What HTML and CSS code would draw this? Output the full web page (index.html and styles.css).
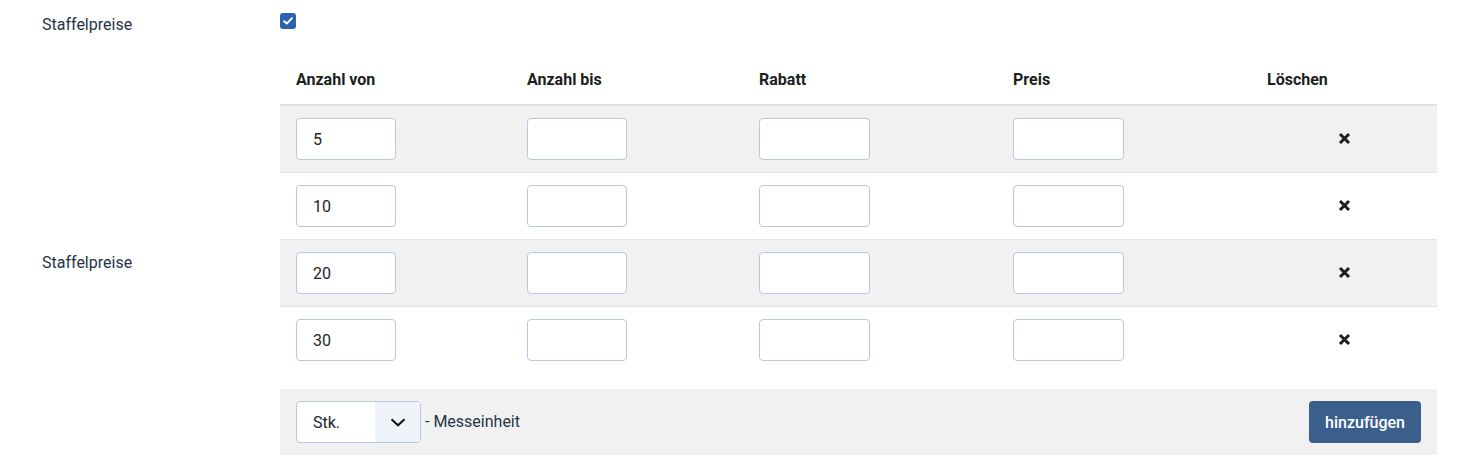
FILE: index.html
```html
<!DOCTYPE html>
<html lang="de">
<head>
    <meta charset="UTF-8">
    <meta name="viewport" content="width=device-width, initial-scale=1.0">
    <title>Staffelpreise</title>
    <link rel="stylesheet" href="styles.css">
</head>
<body>
    <div class="field field-top">
        <label class="field-label">Staffelpreise</label>
        <div class="field-control">
            <span class="check">
                <svg width="10" height="8" viewBox="0 0 10 8"><path d="M1.2 4.2 L3.8 6.6 L8.8 1.4" fill="none" stroke="#fff" stroke-width="2" stroke-linecap="round" stroke-linejoin="round"/></svg>
            </span>
        </div>
    </div>

    <div class="field field-tiers">
        <label class="field-label">Staffelpreise</label>
        <div class="field-control tiers">
            <table class="tier-table">
                <colgroup>
                    <col style="width: 231px">
                    <col style="width: 232px">
                    <col style="width: 254px">
                    <col style="width: 254px">
                    <col>
                </colgroup>
                <thead>
                    <tr>
                        <th>Anzahl von</th>
                        <th>Anzahl bis</th>
                        <th>Rabatt</th>
                        <th>Preis</th>
                        <th>Löschen</th>
                    </tr>
                </thead>
                <tbody id="tierRows"></tbody>
            </table>

            <div class="tier-footer">
                <div class="unit">
                    <div class="select-wrap">
                        <select class="unit-select">
                            <option>Stk.</option>
                        </select>
                        <span class="select-arrow">
                            <svg width="16" height="9" viewBox="0 0 16 9"><path d="M1.5 1.3 L8 7.3 L14.5 1.3" fill="none" stroke="#111" stroke-width="2"/></svg>
                        </span>
                    </div>
                    <span class="unit-text">- Messeinheit</span>
                </div>
                <button class="btn-add">hinzufügen</button>
            </div>
        </div>
    </div>

    <script>
        const tiers = ['5', '10', '20', '30'];
        const rows = document.getElementById('tierRows');

        function renderRows() {
            rows.innerHTML = '';
            tiers.forEach((from, i) => {
                const tr = document.createElement('tr');
                tr.innerHTML =
                    '<td><input class="tier-input" type="text" value="' + from + '"></td>' +
                    '<td><input class="tier-input" type="text"></td>' +
                    '<td><input class="tier-input" type="text"></td>' +
                    '<td><input class="tier-input" type="text"></td>' +
                    '<td class="del"><svg width="13" height="13" viewBox="0 0 13 13"><path d="M2 2 L11 11 M11 2 L2 11" stroke="#1b1e21" stroke-width="3"/></svg></td>';
                rows.appendChild(tr);
            });
        }

        renderRows();
    </script>
</body>
</html>
```

FILE: styles.css
```css
body {
    margin: 0;
    font-family: 'Roboto', 'Liberation Sans', sans-serif;
    font-size: 16px;
    line-height: 24px;
    color: #212529;
    background-color: #fff;
}

.field {
    display: flex;
    margin-right: 44px;
}

.field-label {
    width: 280px;
    flex-shrink: 0;
    box-sizing: border-box;
    padding-left: 42px;
    color: #253447;
}

.field-control {
    flex: 1;
}

.field-top {
    height: 58px;
    box-sizing: border-box;
    padding-top: 13px;
    align-items: flex-start;
}

.check {
    display: flex;
    align-items: center;
    justify-content: center;
    width: 16px;
    height: 16px;
    border-radius: 3px;
    background-color: #2b63ae;
}

.field-tiers {
    align-items: center;
}

.tiers {
    padding-bottom: 13px;
}

.tier-table {
    width: 100%;
    border-collapse: collapse;
    table-layout: fixed;
}

.tier-table th {
    text-align: left;
    font-weight: 700;
    padding: 10px 16px 12px;
    border-bottom: 2px solid #dee2e6;
    color: #1b1e21;
}

.tier-table td {
    padding: 12px 16px;
    border-bottom: 1px solid #dee2e6;
    vertical-align: middle;
}

.tier-table tbody tr:last-child td {
    border-bottom-color: transparent;
}

.tier-table tbody tr:nth-child(odd) {
    background-color: #f1f1f1;
}

.tier-input {
    display: block;
    width: 50%;
    height: 42px;
    box-sizing: border-box;
    padding: 8px 16px;
    border: 1px solid #b9c8e0;
    border-radius: 4px;
    background-color: #fff;
    font-family: inherit;
    font-size: 16px;
    color: #212529;
}

.del {
    text-align: center;
}

.del svg {
    display: inline-block;
    vertical-align: middle;
    margin-top: -3px;
}

.tier-footer {
    display: flex;
    align-items: center;
    justify-content: space-between;
    margin-top: 15px;
    padding: 12px 16px;
    background-color: #f1f1f1;
}

.unit {
    display: flex;
    align-items: center;
    gap: 4px;
}

.select-wrap {
    position: relative;
    width: 125px;
    height: 42px;
}

.unit-select {
    appearance: none;
    -webkit-appearance: none;
    width: 100%;
    height: 100%;
    box-sizing: border-box;
    padding: 0 16px;
    border: 1px solid #b9c8e0;
    border-radius: 4px;
    background-color: #fff;
    font-family: inherit;
    font-size: 16px;
    color: #212529;
}

.select-arrow {
    position: absolute;
    top: 1px;
    right: 1px;
    bottom: 1px;
    width: 45px;
    display: flex;
    align-items: center;
    justify-content: center;
    background-color: #eef3fa;
    border-radius: 0 3px 3px 0;
    pointer-events: none;
}

.unit-text {
    color: #253447;
}

.btn-add {
    height: 42px;
    padding: 0 16px;
    border: none;
    border-radius: 4px;
    background-color: #3b5f8d;
    color: #fff;
    font-family: inherit;
    font-size: 16px;
    font-weight: 500;
    cursor: pointer;
}
```
